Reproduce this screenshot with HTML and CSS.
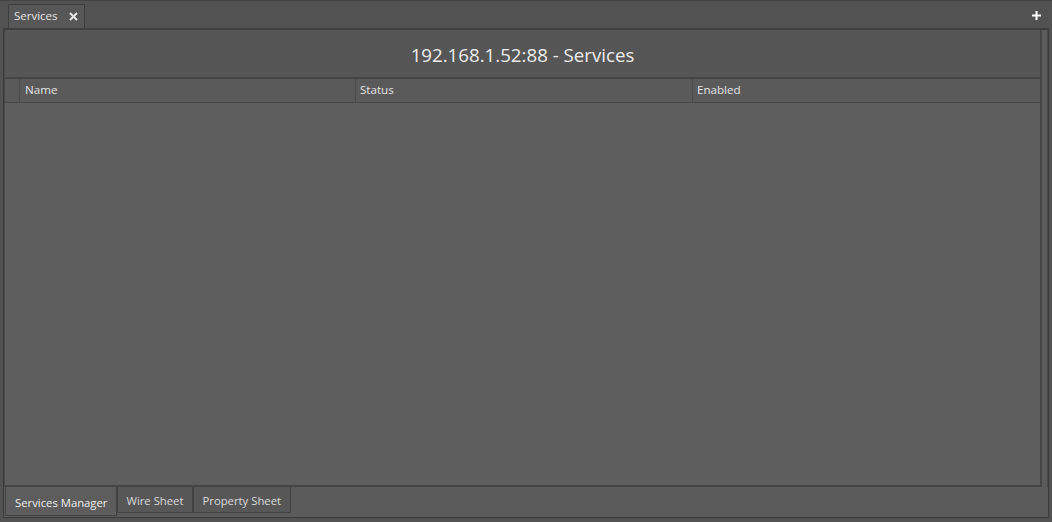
FILE: index.html
```html
<!DOCTYPE html>
<html>
<head>
<meta charset="utf-8">
<link rel="stylesheet" href="styles.css">
</head>
<body>
<div class="app">
  <div class="topbar">
    <div class="doc-tab">
      <span class="doc-tab-label">Services</span>
      <svg class="close" width="9" height="9" viewBox="0 0 9 9"><path d="M1 1L8 8M8 1L1 8" stroke="#e6e6e6" stroke-width="2"/></svg>
    </div>
    <svg class="plus" width="9" height="9" viewBox="0 0 9 9"><path d="M4.5 0V9M0 4.5H9" stroke="#ffffff" stroke-width="2"/></svg>
  </div>
  <div class="frame">
    <div class="content">
      <div class="panel">
        <div class="title">192.168.1.52:88 - Services</div>
        <div class="table-head">
          <div class="col col-sel"></div>
          <div class="col col-name">Name</div>
          <div class="col col-status">Status</div>
          <div class="col col-enabled">Enabled</div>
        </div>
        <div class="table-body"></div>
      </div>
      <div class="scroll-strip"></div>
    </div>
    <div class="view-tabs">
      <div class="view-tab active">Services Manager</div>
      <div class="view-tab">Wire Sheet</div>
      <div class="view-tab">Property Sheet</div>
    </div>
  </div>
</div>
</body>
</html>
```
FILE: styles.css
```css
html, body {
  margin: 0;
  padding: 0;
  background: #525252;
  font-family: "Open Sans", "Liberation Sans", sans-serif;
  color: #e4e4e4;
}
.app {
  width: 1052px;
  height: 522px;
  display: flex;
  flex-direction: column;
  box-sizing: border-box;
  border-top: 1px solid #444;
}
.topbar {
  height: 27px;
  display: flex;
  align-items: flex-end;
  padding-left: 8px;
  padding-right: 11px;
  position: relative;
}
.doc-tab {
  width: 77px;
  height: 24px;
  box-sizing: border-box;
  border: 1px solid #3e3e3e;
  border-bottom: none;
  background: #575757;
  display: flex;
  align-items: center;
  padding-left: 5px;
  padding-bottom: 2px;
  gap: 11px;
  font-size: 11.5px;
  color: #e4e4e4;
}
.doc-tab-label { line-height: 1; }
.close { margin-top: 1px; }
.plus {
  position: absolute;
  right: 11px;
  top: 10px;
}
.frame {
  flex: 1;
  margin: 0 3px 4px 3px;
  border: 1px solid #3b3b3b;
  border-top: 2px solid #3f3f3f;
  background: #5b5b5b;
  display: flex;
  flex-direction: column;
  min-height: 0;
}
.content {
  flex: 1;
  display: flex;
  min-height: 0;
}
.panel {
  flex: 1;
  display: flex;
  flex-direction: column;
  border-right: 2px solid #454545;
  border-bottom: 2px solid #454545;
  border-left: 1px solid #474747;
}
.title {
  height: 49px;
  background: #565656;
  display: flex;
  align-items: center;
  justify-content: center;
  font-size: 18.7px;
  color: #ececec;
  border-bottom: 2px solid #444;
  padding-top: 2px;
  box-sizing: border-box;
}
.table-head {
  height: 23px;
  display: flex;
  background: #5a5a5a;
  border-bottom: 1px solid #4a4a4a;
  font-size: 11.6px;
  color: #e4e4e4;
}
.col {
  display: flex;
  align-items: center;
  padding-left: 5px;
  padding-bottom: 2px;
  box-sizing: border-box;
  border-right: 1px solid #4b4b4b;
}
.col-sel { width: 15px; padding: 0; }
.col-name { width: 336px; }
.col-status { width: 337px; padding-left: 4px; }
.col-enabled { flex: 1; border-right: none; padding-left: 4px; }
.table-body {
  flex: 1;
  background: #5e5e5e;
}
.scroll-strip {
  width: 5px;
  background: #5c5c5c;
  border-right: 1px solid #4a4a4a;
}
.view-tabs {
  height: 30px;
  display: flex;
  align-items: flex-start;
  padding-left: 1px;
}
.view-tab {
  height: 26px;
  box-sizing: border-box;
  border: 1px solid #424242;
  border-top: none;
  background: #575757;
  font-size: 11.3px;
  color: #dadada;
  display: flex;
  align-items: center;
  padding: 1px 9px 0 8px;
}
.view-tab.active {
  height: 29px;
  background: #5d5d5d;
  color: #eeeeee;
  padding: 2px 9px 0 9px;
}
```
